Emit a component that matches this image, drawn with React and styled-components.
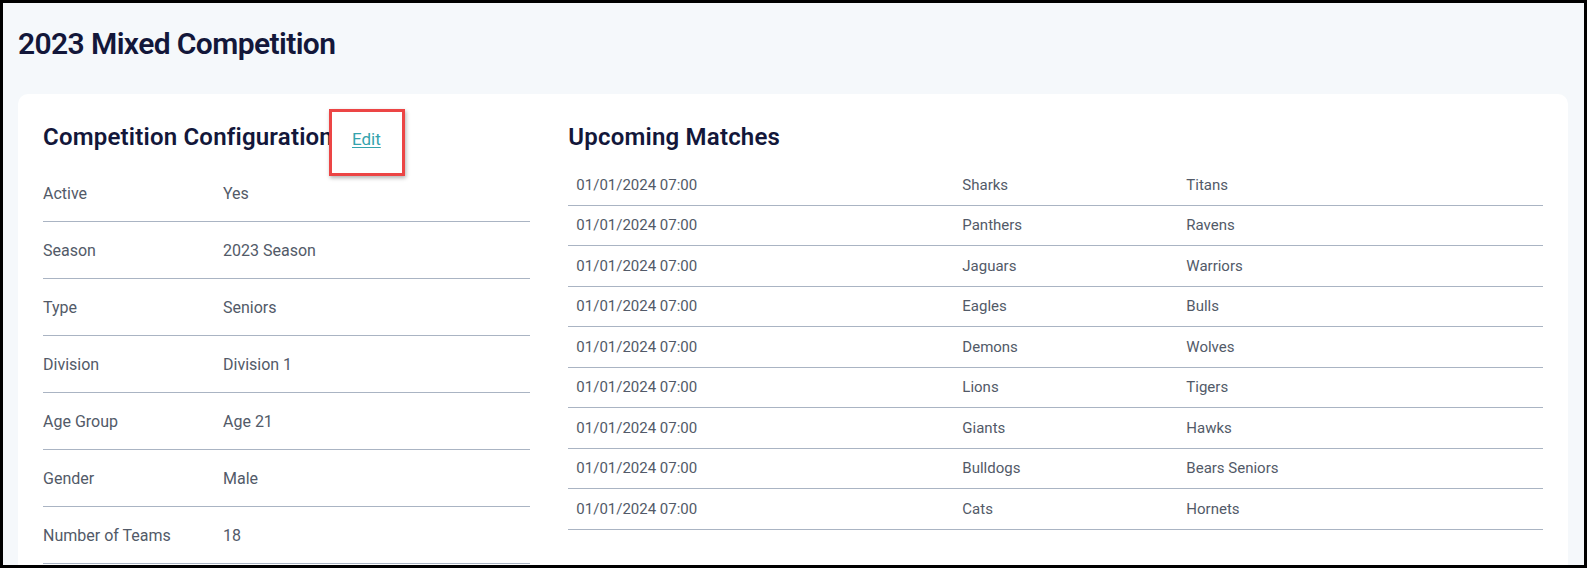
import React from 'react';
import styled, {createGlobalStyle} from 'styled-components';

const GlobalStyle = createGlobalStyle`
  html, body {
    margin: 0;
    padding: 0;
    background: #000;
  }
  * {
    box-sizing: border-box;
  }
`;

const Frame = styled.div`
  height: 568px;
  border: 3px solid #000;
  overflow: hidden;
  background: #f5f8fb;
  font-family: Roboto, 'Liberation Sans', sans-serif;
  padding: 0 16px 0 15px;
`;

const PageTitle = styled.h1`
  margin: 23px 0 32px;
  font-size: 30px;
  line-height: 36px;
  font-weight: 600;
  letter-spacing: -0.6px;
  color: #13173a;
`;

const Card = styled.div`
  background: #fff;
  border-radius: 10px;
  padding: 25px;
  display: grid;
  grid-template-columns: 1fr 2fr;
  column-gap: 38px;
`;

const Section = styled.section`
  display: flex;
  flex-direction: column;
`;

const HeadingRow = styled.div`
  display: flex;
  align-items: baseline;
  gap: 19px;
  margin: 4px 0 13px;
`;

const Heading = styled.h2`
  margin: 0;
  font-size: 24px;
  line-height: 29px;
  font-weight: 600;
  letter-spacing: 0.2px;
  color: #13173a;
`;

const Highlight = styled.span`
  position: relative;
  display: inline-block;
  line-height: 20px;

  &::after {
    content: '';
    position: absolute;
    left: -23px;
    right: -24px;
    top: -20px;
    height: 61px;
    border: 3px solid #ec4545;
    box-shadow: 1px 2px 4px rgba(0, 0, 0, 0.3);
    pointer-events: none;
  }
`;

const EditLink = styled.a`
  font-size: 17px;
  line-height: 20px;
  color: #34a3ad;
  text-decoration: underline;
  text-underline-offset: 2px;
  cursor: pointer;
`;

const InfoRow = styled.div`
  display: grid;
  grid-template-columns: 180px 1fr;
  align-items: center;
  height: 57px;
  border-bottom: 1px solid #aab4c3;
  font-size: 16px;
  color: #525a68;
`;

const MatchRow = styled.div`
  display: grid;
  grid-template-columns: 386px 224px 1fr;
  align-items: center;
  height: 40.5px;
  border-bottom: 1px solid #aab4c3;
  font-size: 15px;
  color: #525a68;
`;

const Cell = styled.div`
  padding-left: 8px;
`;

const config = [
  ['Active', 'Yes'],
  ['Season', '2023 Season'],
  ['Type', 'Seniors'],
  ['Division', 'Division 1'],
  ['Age Group', 'Age 21'],
  ['Gender', 'Male'],
  ['Number of Teams', '18'],
];

const matches = [
  ['Sharks', 'Titans'],
  ['Panthers', 'Ravens'],
  ['Jaguars', 'Warriors'],
  ['Eagles', 'Bulls'],
  ['Demons', 'Wolves'],
  ['Lions', 'Tigers'],
  ['Giants', 'Hawks'],
  ['Bulldogs', 'Bears Seniors'],
  ['Cats', 'Hornets'],
];

function App() {
  return (
    <>
      <GlobalStyle />
      <Frame>
        <PageTitle>2023 Mixed Competition</PageTitle>
        <Card>
          <Section>
            <HeadingRow>
              <Heading>Competition Configuration</Heading>
              <Highlight>
                <EditLink>Edit</EditLink>
              </Highlight>
            </HeadingRow>
            {config.map(([label, value]) => (
              <InfoRow key={label}>
                <span>{label}</span>
                <span>{value}</span>
              </InfoRow>
            ))}
          </Section>
          <Section>
            <HeadingRow>
              <Heading>Upcoming Matches</Heading>
            </HeadingRow>
            {matches.map(([home, away]) => (
              <MatchRow key={home}>
                <Cell>01/01/2024 07:00</Cell>
                <Cell>{home}</Cell>
                <Cell>{away}</Cell>
              </MatchRow>
            ))}
          </Section>
        </Card>
      </Frame>
    </>
  );
}

export default App;
